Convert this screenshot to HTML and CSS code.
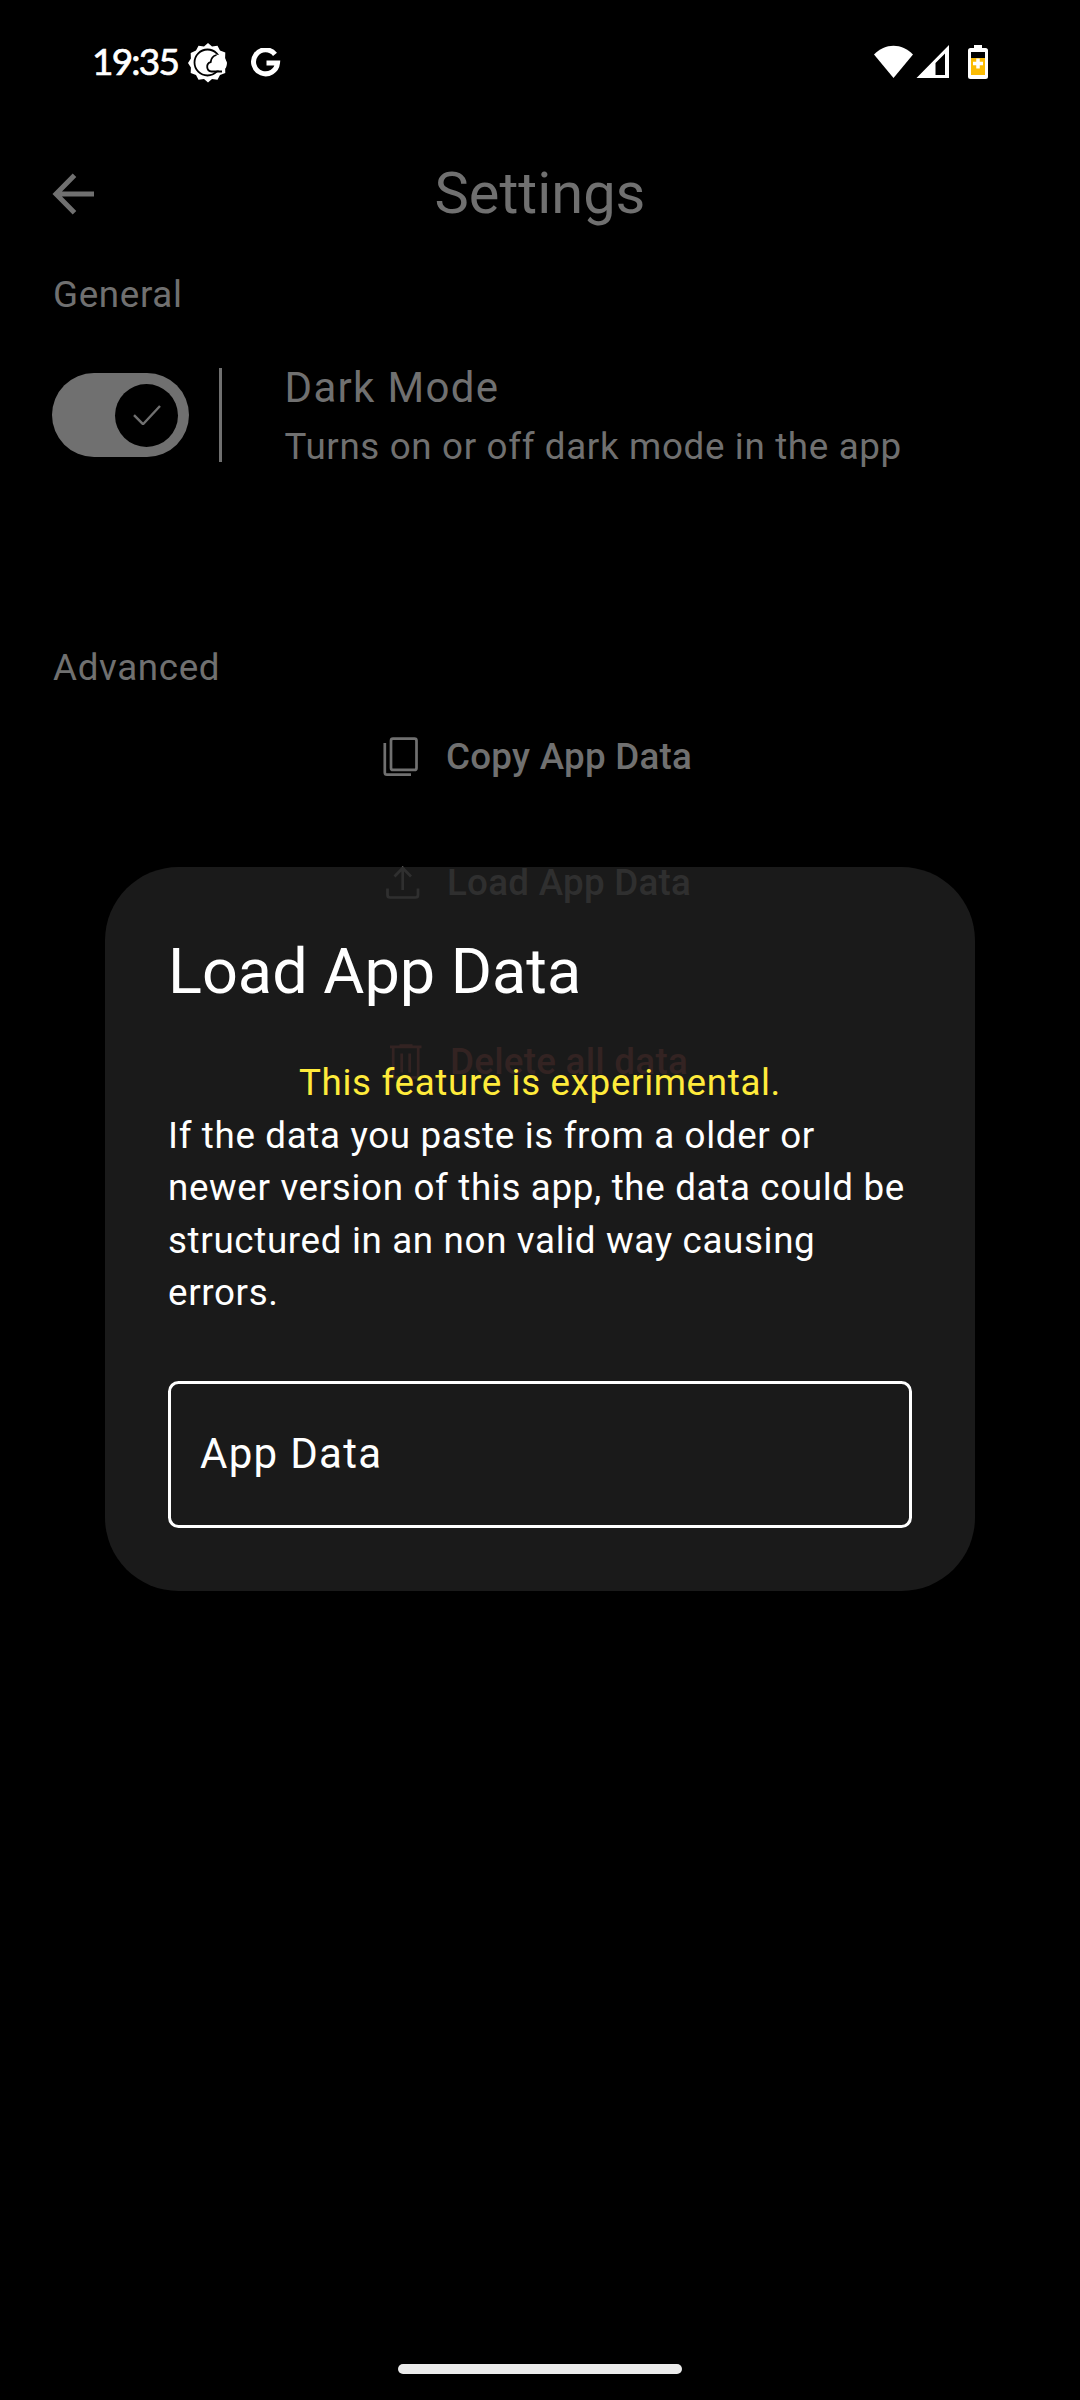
FILE: index.html
```html
<!DOCTYPE html>
<html lang="en">
<head>
<meta charset="utf-8">
<title>Settings</title>
<link rel="stylesheet" href="styles.css">
</head>
<body>
<main class="screen">
  <header class="status">
    <span class="time">19:35</span>
    <svg class="weather" width="40" height="40" viewBox="0 0 40 40">
      <path fill="#fff" d="M20 0l4 3.500 5.500-.8 2.500 4.800 5.300 2-.2 5.500L39 20l-1.900 4.500.2 5.500-5.300 2-2.500 4.800-5.500-.8L20 39.500 16 36l-5.500.8L8 32l-5.300-2 .2-5.500L0 20l2.900-4.500-.2-5.500L8 7.500l2.500-4.800 5.500.8z"/>
      <circle cx="19.500" cy="19.500" r="13" fill="#fff" stroke="#000" stroke-width="1.800"/>
      <path fill="#fff" d="M23.500 27.500a4 4 0 0 1-1-7.500C23.500 10.500 35 9.500 36.500 16c4 3.500 2.500 11.500-3.500 11.500z"/>
      <path fill="none" stroke="#000" stroke-width="1.800" d="M28.500 12c-3.800 1-5.500 4-5.800 7.100a4.800 4.800 0 0 0 .8 9.400H34"/>
    </svg>
    <svg class="google" width="30" height="30" viewBox="0 0 30 30">
      <path fill="none" stroke="#fff" stroke-width="5" d="M24 6.400A12 12 0 1 0 26.500 15H15.500"/>
    </svg>
    <svg class="signals" width="116" height="36" viewBox="0 0 116 36">
      <path fill="#fff" d="M0 9.500C11-2.300 28-2.300 39 9.500L19.500 33z"/>
      <path fill="#fff" fill-rule="evenodd" d="M42.500 33L75 0v33zM61.500 18v12H71V8.500z"/>
      <rect x="94" y="3" width="20" height="31" rx="2.500" fill="#fff"/>
      <rect x="100" y="0" width="8" height="5" fill="#fff"/>
      <rect x="97" y="7" width="14" height="6" fill="#000"/>
      <rect x="97" y="13" width="14" height="17" fill="#fbbc04"/>
      <path stroke="#fff" stroke-width="3.500" d="M99 18.500h10M104 13.500v10"/>
    </svg>
  </header>

  <div class="appbar">
    <svg class="back" width="42" height="42" viewBox="0 0 42 42">
      <path fill="none" stroke="#707070" stroke-width="5" d="M22.500 2.200L4 21l18.500 18.800M4 21h38"/>
    </svg>
    <h1>Settings</h1>
  </div>

  <h2 class="section">General</h2>
  <div class="setting">
    <div class="switch">
      <div class="thumb">
        <svg width="28" height="20" viewBox="0 0 28 20"><path fill="none" stroke="#707070" stroke-width="2.400" d="M1 10.200l9 9L27 1"/></svg>
      </div>
    </div>
    <div class="rule"></div>
    <div class="labels">
      <div class="name">Dark Mode</div>
      <div class="detail">Turns on or off dark mode in the app</div>
    </div>
  </div>

  <h2 class="section advanced">Advanced</h2>
  <div class="actions">
    <div class="action copy">
      <svg width="36" height="40" viewBox="0 0 36 40" fill="none" stroke="#707070" stroke-width="2.700">
        <rect x="8" y="1.700" width="25.500" height="31.200" rx="2"/><path d="M1.800 6v29.500q0 2.200 2.200 2.200h24"/>
      </svg>
      <span>Copy App Data</span>
    </div>
    <div class="action load">
      <svg width="34" height="34" viewBox="0 0 34 34" fill="none" stroke="#707070" stroke-width="2.700">
        <path d="M1.500 22.500v6.500q0 2.500 2.500 2.500h25.500q2.500 0 2.500-2.500v-6.500M16.700 24V2M8.500 10.500L16.700 2l8.300 8.500"/>
      </svg>
      <span>Load App Data</span>
    </div>
    <div class="action delete">
      <svg width="32" height="36" viewBox="0 0 32 36" fill="none" stroke="#85332b" stroke-width="2.700">
        <path d="M0 2.800h31.500M9.500 1.500h13M3.200 3v30.500h25V3M11.700 9.500v19M19.700 9.500v19"/>
      </svg>
      <span>Delete all data</span>
    </div>
  </div>

  <section class="dialog">
    <h3>Load App Data</h3>
    <p class="warning">This feature is experimental.</p>
    <p class="message">If the data you paste is from a older or newer version of this app, the data could be structured in an non valid way causing errors.</p>
    <div class="field">App Data</div>
  </section>

  <div class="handle"></div>
</main>
</body>
</html>
```
FILE: styles.css
```css
* { box-sizing: border-box; }
body { margin: 0; background: #000; font-family: Roboto, sans-serif; }
h1, h2, h3, p { margin: 0; font-weight: 400; }
svg { display: block; flex: none; }

.screen {
  position: relative;
  display: flex;
  flex-direction: column;
  width: 1080px;
  height: 2400px;
  overflow: hidden;
  color: #707070;
}

.status {
  display: flex;
  align-items: flex-start;
  height: 157px;
  padding: 43px 90px 0 92px;
}
.time {
  width: 96px;
  margin-top: -4px;
  font: 400 37px/44px Lato, sans-serif;
  letter-spacing: -1.8px;
  color: #fff;
  -webkit-text-stroke: 0.7px #fff;
  white-space: nowrap;
}
.google { margin: 5px 0 0 23px; }
.signals { margin: 2px 0 0 auto; }

.appbar {
  display: grid;
  grid-template-columns: 112px 1fr 112px;
  height: 111.5px;
}
.back { margin: 16px 0 0 52px; }
.appbar h1 {
  font-size: 57.75px;
  line-height: 73.5px;
  text-align: center;
}

.section {
  padding-left: 53px;
  font-size: 36.75px;
  line-height: 52.5px;
  letter-spacing: 0.656px;
}
.setting {
  display: flex;
  height: 128px;
  margin-top: 35px;
  padding-left: 52px;
}
.switch {
  display: flex;
  justify-content: flex-end;
  width: 136.5px;
  height: 84px;
  margin-top: 17px;
  padding: 10.5px;
  border-radius: 42px;
  background: #707070;
}
.thumb {
  display: flex;
  align-items: center;
  justify-content: center;
  width: 63px;
  height: 63px;
  border-radius: 50%;
  background: #000;
}
.rule { width: 3px; height: 94px; margin: 12px 62.5px 0 30.5px; background: #707070; }
.name { font-size: 42px; line-height: 63px; letter-spacing: 1.3125px; }
.detail { margin-top: 2px; font-size: 36.75px; line-height: 52.5px; letter-spacing: 0.656px; }

.advanced { margin-top: 158px; }
.actions { display: flex; flex-direction: column; padding-left: 383px; margin-top: 36px; }
.action {
  display: flex;
  align-items: center;
  height: 52.5px;
  font-size: 36.75px;
  font-weight: 500;
  letter-spacing: 0.2625px;
  white-space: nowrap;
}
.copy span { margin-left: 27px; }
.load { margin-top: 73.5px; padding-left: 3px; }
.load span { margin-left: 27px; }
.delete { margin-top: 126.5px; padding-left: 7px; color: #85332b; }
.delete span { margin-left: 28px; }

.dialog {
  position: absolute;
  top: 867px;
  left: 105px;
  width: 870px;
  height: 723.5px;
  padding: 63px;
  border-radius: 73.5px;
  background: rgba(32, 32, 32, 0.81);
  color: #fff;
}
.dialog h3 { font-size: 63px; line-height: 84px; }
.dialog p { font-size: 36.75px; line-height: 52.5px; letter-spacing: 0.656px; }
.dialog .warning { margin-top: 43px; text-align: center; color: #ffeb3b; }
.field {
  display: flex;
  align-items: center;
  height: 147px;
  margin-top: 61.5px;
  padding: 0 0 3px 29px;
  border: 3px solid #fff;
  border-radius: 10.5px;
  font-size: 42px;
  letter-spacing: 1.3125px;
}

.handle {
  width: 284px;
  height: 10px;
  margin: auto auto 26px;
  border-radius: 5px;
  background: #ebebeb;
}
```
